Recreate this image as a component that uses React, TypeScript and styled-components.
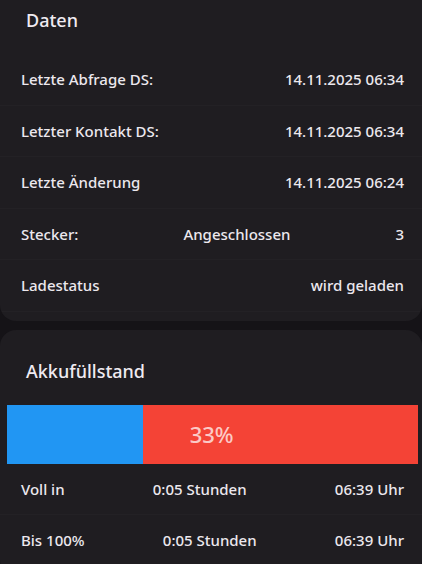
import React from "react";
import styled, { createGlobalStyle } from "styled-components";

const GlobalStyle = createGlobalStyle`
  html, body {
    margin: 0;
    padding: 0;
    background: #151317;
  }
  body {
    font-family: "Noto Sans", "DejaVu Sans", sans-serif;
    color: #ece8ee;
  }
`;

type Row = { label: string; middle?: string; value: string };

const daten: Row[] = [
  { label: "Letzte Abfrage DS:", value: "14.11.2025 06:34" },
  { label: "Letzter Kontakt DS:", value: "14.11.2025 06:34" },
  { label: "Letzte Änderung", value: "14.11.2025 06:24" },
  { label: "Stecker:", middle: "Angeschlossen", value: "3" },
  { label: "Ladestatus", value: "wird geladen" },
];

const akku: Row[] = [
  { label: "Voll in", middle: "0:05 Stunden", value: "06:39 Uhr" },
  { label: "Bis 100%", middle: "0:05 Stunden", value: "06:39 Uhr" },
];

const level = 33;

const App: React.FC = () => {
  return (
    <>
      <GlobalStyle />
      <Page>
        <Card $flatTop>
          <Title $top={8}>Daten</Title>
          <List>
            {daten.map((r) => (
              <InfoRow key={r.label}>
                <span>{r.label}</span>
                {r.middle && <span>{r.middle}</span>}
                <span>{r.value}</span>
              </InfoRow>
            ))}
          </List>
        </Card>
        <Card>
          <Title $top={29}>Akkufüllstand</Title>
          <Bar>
            <Filled style={{ width: `${level}%` }} />
            <Rest>{level}%</Rest>
          </Bar>
          <List>
            {akku.map((r) => (
              <InfoRow key={r.label}>
                <span>{r.label}</span>
                <span>{r.middle}</span>
                <span>{r.value}</span>
              </InfoRow>
            ))}
          </List>
        </Card>
      </Page>
    </>
  );
};

const Page = styled.div`
  display: flex;
  flex-direction: column;
  gap: 9px;
  width: 422px;
`;

const Card = styled.section<{ $flatTop?: boolean }>`
  background: #1f1d21;
  border-radius: ${(p) => (p.$flatTop ? "0 0 16px 16px" : "16px")};
  padding-bottom: 9px;
  overflow: hidden;
`;

const Title = styled.h2<{ $top: number }>`
  margin: 0;
  padding: ${(p) => p.$top}px 0 0 26px;
  font-size: 18px;
  line-height: 24px;
  font-weight: 500;
  color: #efebf1;
`;

const List = styled.div`
  display: flex;
  flex-direction: column;
  margin-top: 22px;
`;

const InfoRow = styled.div`
  display: flex;
  justify-content: space-between;
  align-items: center;
  height: 51.5px;
  box-sizing: border-box;
  padding: 0 18px 0 21px;
  border-bottom: 1px solid rgba(255, 255, 255, 0.018);
  font-size: 15px;
  font-weight: 500;
  white-space: nowrap;
`;

const Bar = styled.div`
  display: flex;
  height: 59px;
  margin: 22px 4px -22px 7px;
`;

const Filled = styled.div`
  background: #2196f3;
  flex: none;
`;

const Rest = styled.div`
  flex: 1;
  display: flex;
  align-items: center;
  padding-left: 47px;
  background: #f44336;
  color: rgba(255, 255, 255, 0.72);
  font-size: 22px;
  font-weight: 500;
`;

export default App;
